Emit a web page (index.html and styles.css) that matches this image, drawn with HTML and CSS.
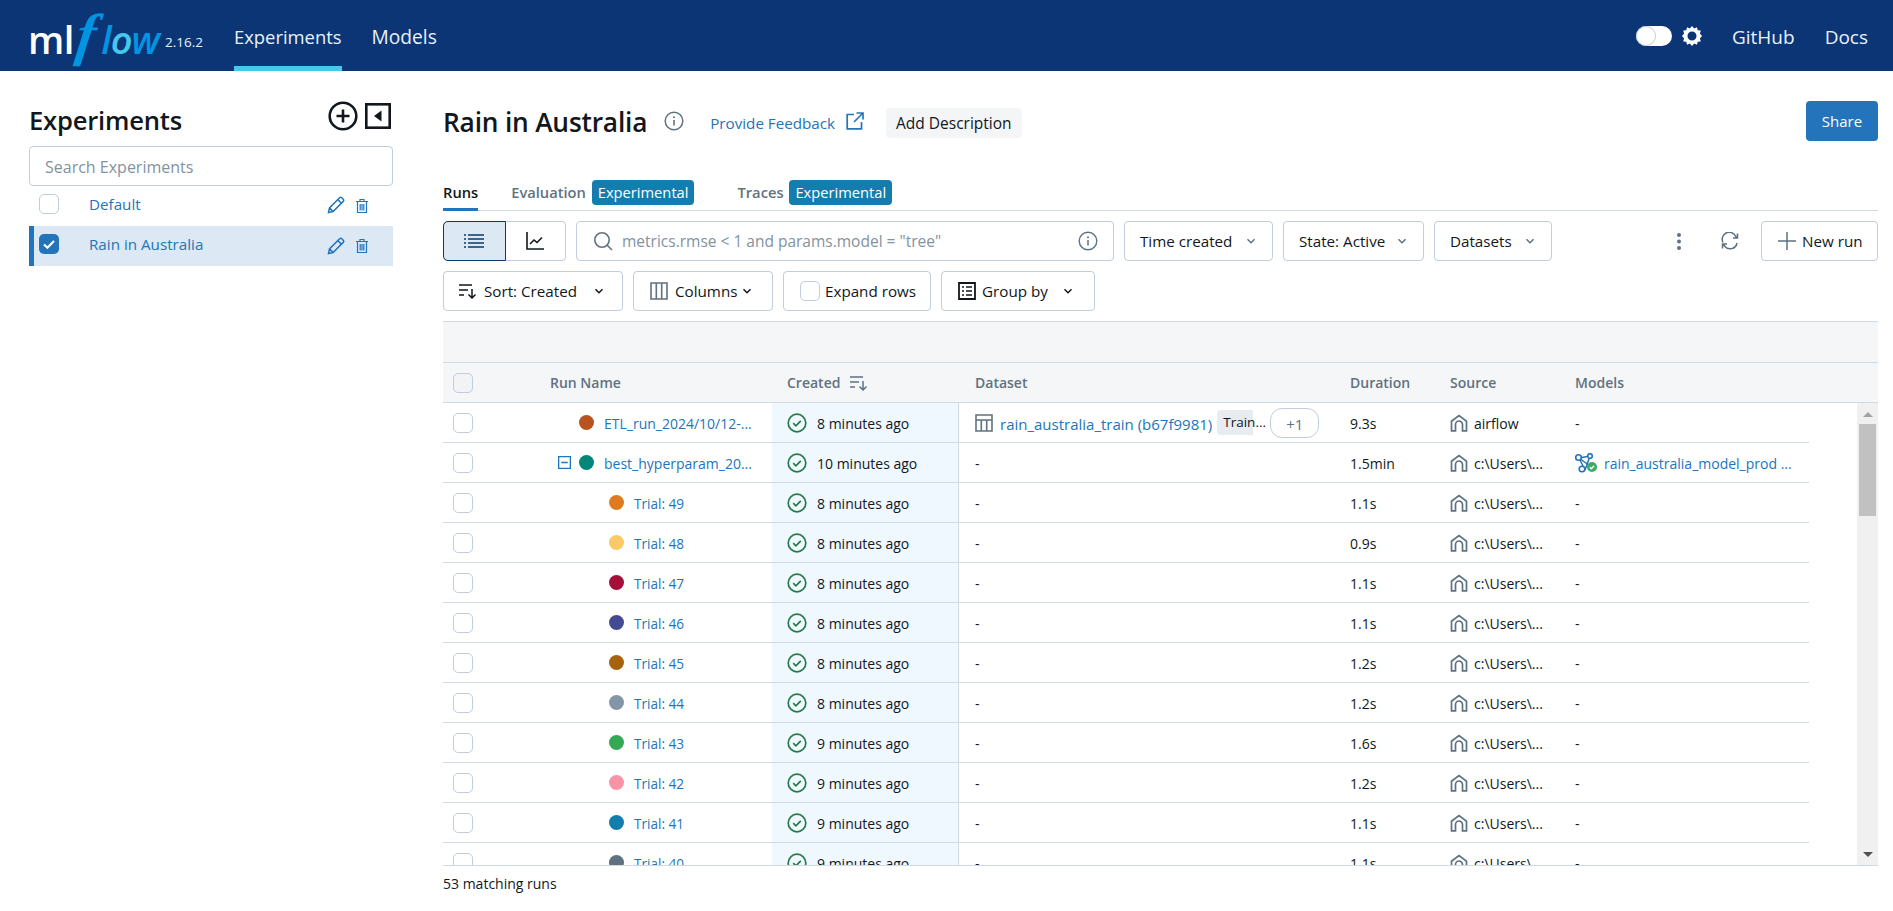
FILE: index.html
```html
<!DOCTYPE html>
<html lang="en">
<head>
<meta charset="utf-8">
<title>MLflow</title>
<link rel="stylesheet" href="styles.css">
</head>
<body>
<svg class="defs" width="0" height="0" aria-hidden="true">
  <defs>
    <symbol id="i-status" viewBox="0 0 20 20"><circle cx="10" cy="10" r="8.8" fill="none" stroke="#277c43" stroke-width="1.7"/><path d="M6.200 10.200l2.700 2.600 4.900-5" fill="none" stroke="#277c43" stroke-width="1.700"/></symbol>
    <symbol id="i-source" viewBox="0 0 18 18"><path d="M1.500 16.800V7.200L9 1.500l7.500 5.700v9.600h-4V10.500a3.500 3.500 0 0 0-7 0v6.300z" fill="none" stroke="#5f7281" stroke-width="1.700"/></symbol>
    <symbol id="i-edit" viewBox="0 0 18 18"><path d="M1.500 16.500l1-4.600L12.600 1.800a1.600 1.600 0 0 1 2.200 0l1.400 1.400a1.600 1.600 0 0 1 0 2.200L6.100 15.500zM10.800 3.600l3.600 3.600M2.500 11.900l3.600 3.600" fill="none" stroke="#2374bb" stroke-width="1.500"/></symbol>
    <symbol id="i-trash" viewBox="0 0 14 16"><path d="M1 3.500h12M5 3.500V1.500h4v2M2.500 3.500v11h9v-11M5.200 6v6.500M7 6v6.500M8.800 6v6.500" fill="none" stroke="#2374bb" stroke-width="1.200"/></symbol>
    <symbol id="i-chev" viewBox="0 0 12 12"><path d="M2.500 4.300L6 7.800l3.500-3.500" fill="none" stroke="currentColor" stroke-width="1.500"/></symbol>
  </defs>
</svg>

<header class="topbar">
  <div class="brand">
    <span class="logo"><span class="logo-ml">ml</span><span class="logo-f">f</span><span class="logo-low">l<span class="logo-o">o</span>w</span></span>
    <span class="version">2.16.2</span>
  </div>
  <nav class="nav">
    <a class="nav-link active">Experiments</a>
    <a class="nav-link models">Models</a>
  </nav>
  <div class="top-right">
    <span class="toggle"><span class="knob"></span></span>
    <svg class="gear" viewBox="0 0 20 20" width="20" height="20"><path fill="#fff" fill-rule="evenodd" d="M10 0l2.200 2.600L15 1.300l.7 3 3.100.3-.9 3 2.100 2.400-2.100 2.400.9 3-3.100.3-.7 3-2.800-1.300L10 20l-2.200-2.600L5 18.700l-.7-3-3.100-.3.9-3L0 10l2.100-2.400-.9-3 3.100-.3.7-3 2.800 1.300zM10 5.500a4.500 4.500 0 1 0 0 9 4.500 4.500 0 0 0 0-9z"/><circle cx="10" cy="10" r="3.400" fill="#0b3574"/></svg>
    <a class="top-link">GitHub</a>
    <a class="top-link">Docs</a>
  </div>
</header>

<div class="page">
  <aside class="sidebar">
    <div class="side-head">
      <h2 class="side-title">Experiments</h2>
      <div class="side-tools">
        <svg viewBox="0 0 30 30" width="30" height="30"><circle cx="15" cy="15" r="13.300" fill="none" stroke="#11171c" stroke-width="2.600"/><path d="M15 8.500v13M8.500 15h13" stroke="#11171c" stroke-width="2.600"/></svg>
        <svg viewBox="0 0 26 26" width="26" height="26"><rect x="1.300" y="1.300" width="23.400" height="23.400" fill="none" stroke="#11171c" stroke-width="2.600"/><path d="M16.500 7.500v11L9 13z" fill="#11171c"/></svg>
      </div>
    </div>
    <div class="side-search">Search Experiments</div>
    <ul class="exp-list">
      <li class="exp-row">
        <span class="check"></span>
        <a class="exp-name">Default</a>
        <svg class="ic-edit" width="18" height="18"><use href="#i-edit"/></svg>
        <svg class="ic-trash" width="14" height="16"><use href="#i-trash"/></svg>
      </li>
      <li class="exp-row selected">
        <span class="check checked"><svg viewBox="0 0 20 20" width="20" height="20"><path d="M5 10.500l3.400 3.200L15 7" fill="none" stroke="#fff" stroke-width="2.200"/></svg></span>
        <a class="exp-name">Rain in Australia</a>
        <svg class="ic-edit" width="18" height="18"><use href="#i-edit"/></svg>
        <svg class="ic-trash" width="14" height="16"><use href="#i-trash"/></svg>
      </li>
    </ul>
  </aside>

  <main class="main">
    <div class="title-row">
      <h1 class="title">Rain in Australia</h1>
      <svg class="title-info" viewBox="0 0 20 20" width="20" height="20"><circle cx="10" cy="10" r="8.800" fill="none" stroke="#5f7281" stroke-width="1.500"/><path d="M10 9v5.500" stroke="#5f7281" stroke-width="1.600"/><circle cx="10" cy="6.200" r="1" fill="#5f7281"/></svg>
      <a class="feedback">Provide Feedback</a>
      <svg class="ext" viewBox="0 0 18 18" width="18" height="18"><path d="M8 2.500H1.200v14.300h14.300V10M10.500 1H17v6.500M17 1L8 10" fill="none" stroke="#2374bb" stroke-width="1.700"/></svg>
      <span class="add-desc">Add Description</span>
      <button class="share">Share</button>
    </div>

    <div class="tabs">
      <span class="tab active">Runs</span>
      <span class="tab">Evaluation <span class="exp-tag">Experimental</span></span>
      <span class="tab">Traces <span class="exp-tag">Experimental</span></span>
    </div>

    <div class="toolbar">
      <div class="segment">
        <span class="seg on"><svg viewBox="0 0 20 16" width="20" height="16"><path d="M0 2h2M4 2h16M0 6h2M4 6h16M0 10h2M4 10h16M0 14h2M4 14h16" stroke="#0e3a66" stroke-width="1.500"/></svg></span>
        <span class="seg"><svg viewBox="0 0 18 18" width="18" height="18"><path d="M1 0v17h17" fill="none" stroke="#11171c" stroke-width="1.600"/><path d="M4 12l4-4 3 2.500 5-5" fill="none" stroke="#11171c" stroke-width="1.600"/></svg></span>
      </div>
      <div class="filter">
        <svg viewBox="0 0 20 20" width="20" height="20"><circle cx="9" cy="9" r="7.200" fill="none" stroke="#5f7281" stroke-width="1.600"/><path d="M14 14l5 5" stroke="#5f7281" stroke-width="1.600"/></svg>
        <span class="filter-text">metrics.rmse &lt; 1 and params.model = "tree"</span>
        <svg class="filter-info" viewBox="0 0 20 20" width="20" height="20"><circle cx="10" cy="10" r="8.800" fill="none" stroke="#5f7281" stroke-width="1.400"/><path d="M10 9v5.500" stroke="#5f7281" stroke-width="1.500"/><circle cx="10" cy="6.200" r="1" fill="#5f7281"/></svg>
      </div>
      <button class="btn w-time">Time created<svg class="chev grey" width="12" height="12"><use href="#i-chev"/></svg></button>
      <button class="btn w-state">State: Active<svg class="chev grey" width="12" height="12"><use href="#i-chev"/></svg></button>
      <button class="btn w-data">Datasets<svg class="chev grey" width="12" height="12"><use href="#i-chev"/></svg></button>
      <span class="spacer"></span>
      <svg class="kebab" viewBox="0 0 4 18" width="4" height="18"><circle cx="2" cy="3" r="2" fill="#5f7281"/><circle cx="2" cy="9.500" r="2" fill="#5f7281"/><circle cx="2" cy="16" r="2" fill="#5f7281"/></svg>
      <svg class="refresh" viewBox="0 0 18 18" width="18" height="18"><path d="M2 10.500A7 7 0 0 1 14.500 4l1.500 2M16 11a7 7 0 0 1-12.500 3L2 12M16.500 1.500V6H12M1.500 16.500V12H6" fill="none" stroke="#5f7281" stroke-width="1.500"/></svg>
      <button class="btn w-new"><svg viewBox="0 0 18 18" width="18" height="18"><path d="M9 0v18M0 9h18" stroke="#5f7281" stroke-width="1.500"/></svg>New run</button>
    </div>

    <div class="toolbar">
      <button class="btn w-sort"><svg viewBox="0 0 18 16" width="18" height="16"><path d="M0 2h13M0 7h9M0 12h5M13 6v9M9.500 11.500L13 15l3.500-3.500" fill="none" stroke="#11171c" stroke-width="1.500"/></svg>Sort: Created<svg class="chev" width="12" height="12"><use href="#i-chev"/></svg></button>
      <button class="btn w-cols"><svg viewBox="0 0 18 18" width="18" height="18"><path d="M1 1h16v16H1zM6.300 1v16M11.700 1v16" fill="none" stroke="#5f7281" stroke-width="1.600"/></svg>Columns<svg class="chev" width="12" height="12"><use href="#i-chev"/></svg></button>
      <button class="btn w-expand"><span class="check small"></span>Expand rows</button>
      <button class="btn w-group"><svg viewBox="0 0 18 18" width="18" height="18"><path d="M1 1h16v16H1z" fill="none" stroke="#11171c" stroke-width="1.800"/><path d="M4 5h2M8 5h6M4 9h2M8 9h6M4 13h2M8 13h6" stroke="#11171c" stroke-width="1.600"/></svg>Group by<svg class="chev" width="12" height="12"><use href="#i-chev"/></svg></button>
    </div>

    <div class="table">
      <div class="band"></div>
      <div class="row head">
        <div class="c-check"><span class="check grey"></span></div>
        <div class="c-name">Run Name</div>
        <div class="c-created plain">Created <svg class="sort-ic" viewBox="0 0 18 16" width="18" height="16"><path d="M0 2h13M0 7h9M0 12h5M13 6v9M9.500 11.500L13 15l3.500-3.500" fill="none" stroke="#5f7281" stroke-width="1.500"/></svg></div>
        <div class="c-data">Dataset</div>
        <div class="c-dur">Duration</div>
        <div class="c-src">Source</div>
        <div class="c-model">Models</div>
      </div>
      <div class="body">
        <div class="scroll">
          <div class="row">
            <div class="c-check"><span class="check"></span></div>
            <div class="c-name"><span class="dot" style="background:#b8521f"></span><a class="link">ETL_run_2024/10/12-...</a></div>
            <div class="c-created"><svg width="20" height="20"><use href="#i-status"/></svg>8 minutes ago</div>
            <div class="c-data">
              <svg class="ds-ic" viewBox="0 0 18 18" width="18" height="18"><path d="M1 1h16v16H1zM1 6h16M6.300 6v11M11.700 6v11" fill="none" stroke="#5f7281" stroke-width="1.600"/></svg>
              <a class="link ds-link">rain_australia_train (b67f9981)</a>
              <span class="ds-tag">Train...</span>
              <span class="ds-more">+1</span>
            </div>
            <div class="c-dur">9.3s</div>
            <div class="c-src"><svg width="18" height="18"><use href="#i-source"/></svg>airflow</div>
            <div class="c-model">-</div>
          </div>
          <div class="row">
            <div class="c-check"><span class="check"></span></div>
            <div class="c-name"><svg class="expander" viewBox="0 0 12 12" width="13" height="13"><path d="M.6.6h10.800v10.800H.6zM3 6h6" fill="none" stroke="#2374bb" stroke-width="1.200"/></svg><span class="dot" style="background:#00877a"></span><a class="link">best_hyperparam_20...</a></div>
            <div class="c-created"><svg width="20" height="20"><use href="#i-status"/></svg>10 minutes ago</div>
            <div class="c-data">-</div>
            <div class="c-dur">1.5min</div>
            <div class="c-src"><svg width="18" height="18"><use href="#i-source"/></svg>c:\Users\...</div>
            <div class="c-model">
              <svg class="model-ic" viewBox="0 0 24 20" width="24" height="20"><path d="M5 5l11-2M5 5l6 12M16 3l-5 14M5 5l11 8" fill="none" stroke="#2374bb" stroke-width="1.500"/><g fill="#fff" stroke="#2374bb" stroke-width="1.600"><circle cx="4.500" cy="4.500" r="2.800"/><circle cx="16" cy="3" r="2.300"/><circle cx="8" cy="16" r="2.800"/></g><circle cx="18" cy="14" r="5" fill="#3caa60"/><path d="M15.800 14.200l1.600 1.500 2.800-3" fill="none" stroke="#fff" stroke-width="1.400"/></svg>
              <a class="link model-link">rain_australia_model_prod ...</a>
            </div>
          </div>
          <div class="row"><div class="c-check"><span class="check"></span></div><div class="c-name child"><span class="dot" style="background:#de7b20"></span><a class="link">Trial: 49</a></div><div class="c-created"><svg width="20" height="20"><use href="#i-status"/></svg>8 minutes ago</div><div class="c-data">-</div><div class="c-dur">1.1s</div><div class="c-src"><svg width="18" height="18"><use href="#i-source"/></svg>c:\Users\...</div><div class="c-model">-</div></div>
          <div class="row"><div class="c-check"><span class="check"></span></div><div class="c-name child"><span class="dot" style="background:#fbc968"></span><a class="link">Trial: 48</a></div><div class="c-created"><svg width="20" height="20"><use href="#i-status"/></svg>8 minutes ago</div><div class="c-data">-</div><div class="c-dur">0.9s</div><div class="c-src"><svg width="18" height="18"><use href="#i-source"/></svg>c:\Users\...</div><div class="c-model">-</div></div>
          <div class="row"><div class="c-check"><span class="check"></span></div><div class="c-name child"><span class="dot" style="background:#a50f38"></span><a class="link">Trial: 47</a></div><div class="c-created"><svg width="20" height="20"><use href="#i-status"/></svg>8 minutes ago</div><div class="c-data">-</div><div class="c-dur">1.1s</div><div class="c-src"><svg width="18" height="18"><use href="#i-source"/></svg>c:\Users\...</div><div class="c-model">-</div></div>
          <div class="row"><div class="c-check"><span class="check"></span></div><div class="c-name child"><span class="dot" style="background:#434a93"></span><a class="link">Trial: 46</a></div><div class="c-created"><svg width="20" height="20"><use href="#i-status"/></svg>8 minutes ago</div><div class="c-data">-</div><div class="c-dur">1.1s</div><div class="c-src"><svg width="18" height="18"><use href="#i-source"/></svg>c:\Users\...</div><div class="c-model">-</div></div>
          <div class="row"><div class="c-check"><span class="check"></span></div><div class="c-name child"><span class="dot" style="background:#a6630c"></span><a class="link">Trial: 45</a></div><div class="c-created"><svg width="20" height="20"><use href="#i-status"/></svg>8 minutes ago</div><div class="c-data">-</div><div class="c-dur">1.2s</div><div class="c-src"><svg width="18" height="18"><use href="#i-source"/></svg>c:\Users\...</div><div class="c-model">-</div></div>
          <div class="row"><div class="c-check"><span class="check"></span></div><div class="c-name child"><span class="dot" style="background:#8396a6"></span><a class="link">Trial: 44</a></div><div class="c-created"><svg width="20" height="20"><use href="#i-status"/></svg>8 minutes ago</div><div class="c-data">-</div><div class="c-dur">1.2s</div><div class="c-src"><svg width="18" height="18"><use href="#i-source"/></svg>c:\Users\...</div><div class="c-model">-</div></div>
          <div class="row"><div class="c-check"><span class="check"></span></div><div class="c-name child"><span class="dot" style="background:#34a853"></span><a class="link">Trial: 43</a></div><div class="c-created"><svg width="20" height="20"><use href="#i-status"/></svg>9 minutes ago</div><div class="c-data">-</div><div class="c-dur">1.6s</div><div class="c-src"><svg width="18" height="18"><use href="#i-source"/></svg>c:\Users\...</div><div class="c-model">-</div></div>
          <div class="row"><div class="c-check"><span class="check"></span></div><div class="c-name child"><span class="dot" style="background:#f993a6"></span><a class="link">Trial: 42</a></div><div class="c-created"><svg width="20" height="20"><use href="#i-status"/></svg>9 minutes ago</div><div class="c-data">-</div><div class="c-dur">1.2s</div><div class="c-src"><svg width="18" height="18"><use href="#i-source"/></svg>c:\Users\...</div><div class="c-model">-</div></div>
          <div class="row"><div class="c-check"><span class="check"></span></div><div class="c-name child"><span class="dot" style="background:#137dae"></span><a class="link">Trial: 41</a></div><div class="c-created"><svg width="20" height="20"><use href="#i-status"/></svg>9 minutes ago</div><div class="c-data">-</div><div class="c-dur">1.1s</div><div class="c-src"><svg width="18" height="18"><use href="#i-source"/></svg>c:\Users\...</div><div class="c-model">-</div></div>
          <div class="row"><div class="c-check"><span class="check"></span></div><div class="c-name child"><span class="dot" style="background:#5f7281"></span><a class="link">Trial: 40</a></div><div class="c-created"><svg width="20" height="20"><use href="#i-status"/></svg>9 minutes ago</div><div class="c-data">-</div><div class="c-dur">1.1s</div><div class="c-src"><svg width="18" height="18"><use href="#i-source"/></svg>c:\Users\...</div><div class="c-model">-</div></div>
        </div>
        <div class="scrollbar">
          <span class="arrow up"></span>
          <span class="thumb"></span>
          <span class="arrow down"></span>
        </div>
      </div>
    </div>
    <div class="footer">53 matching runs</div>
  </main>
</div>
</body>
</html>
```

FILE: styles.css
```css
* { box-sizing: border-box; }
html, body { margin: 0; height: 100%; overflow: hidden; }
body { font-family: "Open Sans", "Noto Sans", sans-serif; font-size: 14px; color: #11171c; background: #fff; }
.defs { position: absolute; }
h1, h2, ul { margin: 0; padding: 0; }
ul { list-style: none; }
svg { flex: none; display: block; }
button { font: inherit; color: inherit; background: #fff; }

.topbar { height: 71px; background: #0b3574; display: flex; align-items: stretch; color: #e9f1fa; }
.brand { width: 234px; padding-left: 28px; display: flex; align-items: center; flex: none; }
.logo { display: flex; align-items: baseline; height: 71px; line-height: 69px; width: 136px; }
.logo-ml { font-weight: 600; font-size: 38px; color: #fff; letter-spacing: -0.5px; }
.logo-f { font-family: "Liberation Serif", serif; font-style: italic; font-weight: 700; font-size: 58px; color: #0194e2; margin: 0 5px 0 3px; transform: skewX(-8deg); }
.logo-low { font-style: italic; font-size: 38px; color: #0194e2; font-weight: 600; letter-spacing: -1px; }
.logo-o { color: #43c9ed; }
.version { font-size: 13.500px; padding-top: 13px; color: #e9f1fa; margin-left: 1px; }
.nav { display: flex; gap: 30px; }
.nav-link { font-size: 18.400px; display: flex; align-items: center; padding-top: 9px; padding-bottom: 3px; color: #e9f1fa; border-bottom: 5px solid transparent; }
.nav-link.active { border-bottom-color: #43c9ed; }
.nav-link.models { font-size: 19.200px; }
.top-right { margin-left: auto; display: flex; align-items: center; padding-right: 25px; }
.toggle { width: 36px; height: 20px; border-radius: 10px; background: #fff; display: block; position: relative; margin-right: 10px; }
.knob { position: absolute; left: 0; top: 0; width: 20px; height: 20px; border-radius: 50%; background: #fff; border: 1px solid #c0cddc; }
.top-link { font-size: 19px; margin-left: 30px; padding-top: 2px; }

.page { display: flex; height: 840px; }
.sidebar { width: 443px; flex: none; padding: 30px 50px 0 29px; }
.side-head { display: flex; height: 45px; align-items: flex-start; justify-content: space-between; }
.side-title { font-size: 25.600px; font-weight: 600; line-height: 36px; margin-top: 2px; letter-spacing: -0.2px; }
.side-tools { display: flex; gap: 7px; align-items: center; padding-right: 2px; }
.side-search { height: 40px; border: 1px solid #c0cddc; border-radius: 4px; padding: 0 15px; line-height: 40px; color: #82929f; font-size: 16px; }
.exp-row { height: 40px; display: flex; align-items: center; padding-left: 5px; padding-right: 24px; padding-bottom: 5px; border-left: 5px solid transparent; }
.exp-row.selected { background: #dce8f3; border-left-color: #2374bb; padding-bottom: 4px; }
.check { display: block; width: 20px; height: 20px; border: 1px solid #c0cddc; border-radius: 5px; background: #fff; flex: none; }
.check.checked { background: #2374bb; border: 0; }
.check.grey { background: #f1f3f5; border-color: #c0cddc; }
.exp-name { color: #2374bb; margin-left: 30px; flex: 1; font-size: 15.200px; }
.ic-edit { margin-right: 10px; margin-top: 3px; }
.ic-trash { margin-top: 4px; }

.main { flex: 1; padding: 30px 15px 0 0; min-width: 0; }
.title-row { display: flex; align-items: center; height: 40px; }
.title { font-size: 26.300px; font-weight: 600; line-height: 40px; letter-spacing: -0.2px; margin-top: 2px; }
.title-info { margin-left: 17px; }
.feedback { color: #2374bb; margin-left: 26px; margin-top: 4px; font-size: 15.200px; }
.ext { margin-left: 11px; }
.add-desc { margin-left: 22px; margin-top: 4px; background: #f4f5f7; height: 30px; line-height: 30px; padding: 0 10px; border-radius: 4px; font-size: 15.500px; }
.share { margin-left: auto; width: 72px; height: 40px; background: #2374bb; color: #fff; border: 0; border-radius: 4px; font-size: 15px; padding: 0; }

.tabs { margin-top: 29px; height: 41px; border-bottom: 1px solid #d1d9e1; display: flex; align-items: flex-start; gap: 33px; }
.tab { font-size: 14.700px; line-height: 24px; height: 41px; color: #5f7281; font-weight: 600; white-space: nowrap; padding-top: 10px; }
.tab.active { color: #11171c; border-bottom: 3px solid #2374bb; }
.tab + .tab + .tab { margin-left: 10px; }
.exp-tag { display: inline-block; background: #137dae; color: #fff; font-weight: 400; border-radius: 4px; height: 25px; line-height: 25px; padding: 0 6px; margin-left: 2px; }

.toolbar { display: flex; margin-top: 10px; height: 40px; gap: 10px; align-items: stretch; font-size: 15.200px; }
.segment { display: flex; width: 123px; border: 1px solid #c0cddc; border-radius: 4px; }
.seg { flex: 1; display: flex; align-items: center; justify-content: center; }
.seg.on { background: #dce8f3; outline: 1px solid #0e3a66; border-radius: 4px 0 0 4px; }
.filter { width: 538px; border: 1px solid #c0cddc; border-radius: 4px; display: flex; align-items: center; padding: 0 15px 0 16px; }
.filter-text { margin-left: 9px; color: #82929f; flex: 1; white-space: nowrap; font-size: 15.500px; }
.btn { border: 1px solid #c0cddc; border-radius: 4px; display: flex; align-items: center; padding: 0 15px; white-space: nowrap; }
.w-time { width: 149px; justify-content: space-between; }
.w-state { width: 141px; justify-content: space-between; }
.w-data { width: 118px; justify-content: space-between; }
.chev { color: #11171c; }
.chev.grey { color: #5f7281; }
.spacer { flex: 1; }
.kebab { align-self: center; margin-right: 30px; }
.refresh { align-self: center; margin-right: 12px; }
.w-new { width: 117px; padding: 0 10px 0 16px; gap: 6px; }
.w-sort { width: 180px; padding: 0 15px; gap: 7px; }
.w-sort .chev { margin-left: 9px; }
.w-cols { width: 140px; padding: 0 16px; gap: 7px; }
.w-cols .chev { margin-left: -3px; }
.w-expand { width: 148px; padding: 0 16px; gap: 5px; }
.w-group { width: 154px; padding: 0 16px; gap: 6px; }
.w-group .chev { margin-left: 8px; }

.table { margin-top: 10px; }
.band { height: 41px; background: #f5f6f8; border-top: 1px solid #d1d9e1; }
.row { height: 40px; display: flex; align-items: stretch; border-bottom: 1px solid #d1d9e1; }
.row.head { height: 41px; background: #f5f6f8; border-top: 1px solid #d1d9e1; color: #5f7281; font-weight: 600; }
.row > div { display: flex; align-items: center; white-space: nowrap; }
.scroll .row > div { padding-top: 2px; }
.scroll .row > div > svg, .scroll .dot, .scroll .check, .ds-tag, .ds-more { margin-top: -2px; }
.c-check { width: 107px; padding-left: 10px; flex: none; }
.c-name { width: 222px; flex: none; padding-left: 29px; }
.head .c-name { padding-left: 0; }
.c-name.child { padding-left: 59px; }
.c-name .expander { margin-left: -21px; margin-right: 8px; }
.dot { width: 15px; height: 15px; border-radius: 50%; margin-right: 10px; flex: none; }
.link { color: #2374bb; }
.child .link { font-size: 13.600px; }
.c-created { width: 187px; flex: none; background: #eff7ff; border-right: 1px solid #d1d9e1; padding-left: 15px; gap: 10px; }
.c-created.plain { background: transparent; border-right: 0; }
.c-data { width: 391px; flex: none; padding-left: 16px; }
.ds-ic { margin-right: 7px; }
.ds-link { font-size: 15px; }
.ds-tag { margin-left: 5px; background: #e8ecf0; width: 36px; height: 25px; line-height: 24px; border-radius: 4px 0 0 4px; padding-left: 6px; flex: none; font-size: 13.500px; }
.ds-more { margin-left: 17px; width: 49px; height: 30px; line-height: 30px; text-align: center; border: 1px solid #c0cddc; border-radius: 12px; color: #5f7281; flex: none; font-size: 15px; }
.c-dur { width: 100px; flex: none; }
.c-src { width: 125px; flex: none; gap: 6px; }
.c-model { flex: 1; min-width: 0; }
.model-ic { margin-right: 6px; margin-left: -1px; }
.body { display: flex; height: 463px; border-bottom: 1px solid #d1d9e1; overflow: hidden; }
.scroll { width: 1366px; flex: none; height: 462px; overflow: hidden; }
.scrollbar { margin-left: 48px; width: 21px; background: #f0f0f0; position: relative; }
.thumb { position: absolute; left: 2px; top: 21px; width: 17px; height: 92px; background: #c1c1c1; }
.arrow { position: absolute; left: 6px; width: 0; height: 0; border-left: 5px solid transparent; border-right: 5px solid transparent; }
.arrow.up { top: 9px; border-bottom: 5px solid #a3a3a3; }
.arrow.down { bottom: 8px; border-top: 5px solid #505050; }
.footer { margin-top: 8px; line-height: 20px; color: #11171c; font-size: 14px; }
```
